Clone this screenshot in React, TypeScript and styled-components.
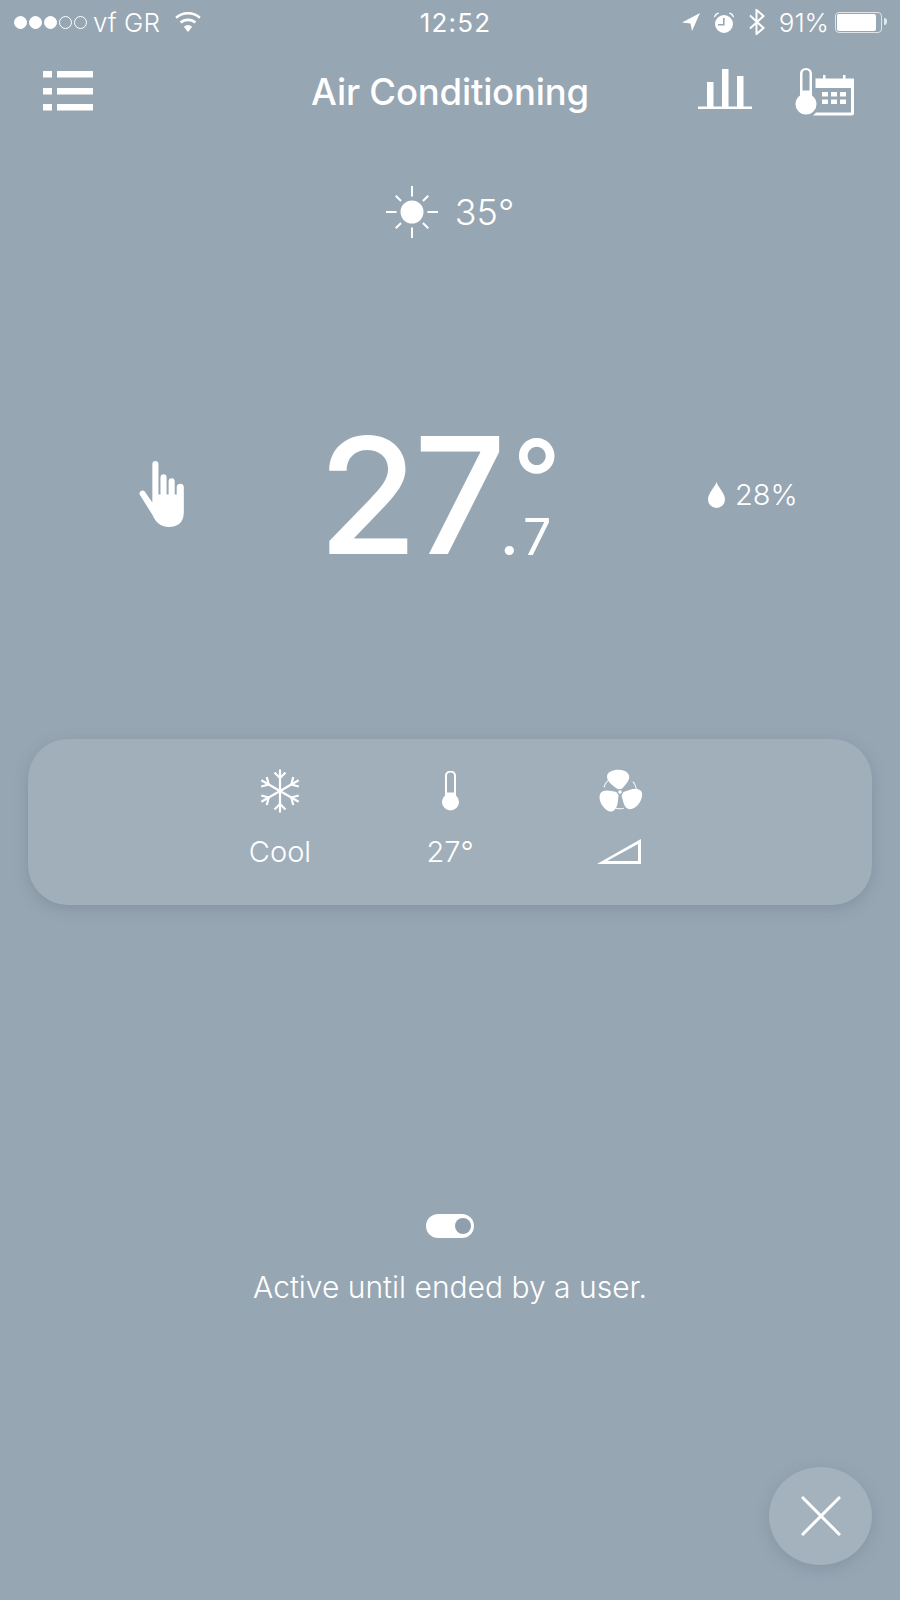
import React from 'react'
import styled, { createGlobalStyle } from 'styled-components'

const GlobalStyle = createGlobalStyle`
  html, body {
    margin: 0;
    padding: 0;
    background: #97a6b3;
  }
  * {
    box-sizing: border-box;
  }
`

const Page = styled.div`
  width: 900px;
  height: 1600px;
  overflow: hidden;
  display: flex;
  flex-direction: column;
  background: #97a6b3;
  color: #fff;
  font-family: Inter, 'Liberation Sans', sans-serif;
`

const StatusBar = styled.div`
  height: 44px;
  display: grid;
  grid-template-columns: 1fr auto 1fr;
  align-items: center;
  padding: 0 12px 0 14px;
  font-size: 26px;
  font-weight: 300;
`

const StatusSide = styled.div<{ $end?: boolean }>`
  display: flex;
  align-items: center;
  justify-content: ${(p) => (p.$end ? 'flex-end' : 'flex-start')};
`

const Signal = styled.div`
  display: flex;
  gap: 2px;
  margin-right: 6px;
`

const Dot = styled.span<{ $on?: boolean }>`
  width: 13px;
  height: 13px;
  border-radius: 50%;
  border: 1px solid #fff;
  background: ${(p) => (p.$on ? '#fff' : 'transparent')};
`

const Clock = styled.div`
  font-weight: 400;
  letter-spacing: 1.2px;
  margin-left: 9px;
`

const Battery = styled.div`
  width: 47px;
  height: 21px;
  margin-left: 6px;
  margin-right: 6px;
  padding: 1px;
  border: 1px solid #dfe4e8;
  border-radius: 4px;
  position: relative;
  &::before {
    content: '';
    display: block;
    width: 91%;
    height: 100%;
    background: #fff;
    border-radius: 2px;
  }
  &::after {
    content: '';
    position: absolute;
    right: -6px;
    top: 5px;
    width: 3px;
    height: 7px;
    background: #e3e7ea;
    border-radius: 0 3px 3px 0;
  }
`

const NavBar = styled.div`
  height: 96px;
  display: grid;
  grid-template-columns: 1fr auto 1fr;
  align-items: center;
  padding: 0 45px 0 43px;
`

const NavTitle = styled.h1`
  margin: 0 0 0 2px;
  font-size: 36.5px;
  font-weight: 500;
  letter-spacing: -0.2px;
`

const NavActions = styled.div`
  display: flex;
  justify-content: flex-end;
  align-items: flex-end;
  gap: 43px;
`

const Icon = styled.svg`
  display: block;
  fill: #fff;
  flex: none;
`

const Weather = styled.div`
  margin-top: 40px;
  height: 64px;
  display: flex;
  justify-content: center;
  align-items: center;
  gap: 17px;
  font-size: 36px;
  font-weight: 300;
`

const Readout = styled.div`
  margin-top: 175px;
  height: 150px;
  display: grid;
  grid-template-columns: 180px 390px 1fr;
  align-items: center;
  padding-left: 138px;
`

const Temperature = styled.div`
  display: flex;
  align-items: flex-start;
  line-height: 1;
`

const Whole = styled.div`
  font-size: 162px;
  font-weight: 500;
  letter-spacing: -4px;
  line-height: 150px;
  margin-top: 1px;
`

const Fraction = styled.div`
  display: flex;
  flex-direction: column;
  margin-left: 10px;
`

const Degree = styled.div`
  font-size: 106px;
  font-weight: 500;
  line-height: 118px;
  height: 80px;
`

const Tenths = styled.div`
  font-size: 50px;
  font-weight: 400;
  line-height: 50px;
  margin: 13px 0 0 -12px;
`

const TenthsPoint = styled.span`
  font-weight: 800;
  margin-right: 5px;
`

const Humidity = styled.div`
  display: flex;
  align-items: center;
  gap: 10px;
  font-size: 29px;
  font-weight: 300;
`

const ModePanel = styled.div`
  margin: 170px 28px 0;
  height: 166px;
  border-radius: 40px;
  background: #a1afbb;
  box-shadow: 0 4px 14px rgba(110, 125, 140, 0.45);
  display: grid;
  grid-template-columns: repeat(3, 170px);
  justify-content: center;
  padding-top: 29px;
`

const ModeItem = styled.div`
  display: flex;
  flex-direction: column;
  align-items: center;
`

const ModeIconSlot = styled.div`
  height: 46px;
  display: flex;
  align-items: center;
  justify-content: center;
`

const ModeLabel = styled.div`
  margin-top: 12px;
  height: 50px;
  display: flex;
  align-items: center;
  font-size: 29px;
  font-weight: 300;
`

const Schedule = styled.div`
  margin-top: 309px;
  display: flex;
  flex-direction: column;
  align-items: center;
`

const Toggle = styled.div`
  width: 48px;
  height: 24px;
  border-radius: 12px;
  background: #fff;
  display: flex;
  align-items: center;
  justify-content: flex-end;
  padding-right: 3px;
`

const ToggleKnob = styled.span`
  width: 16px;
  height: 16px;
  border-radius: 50%;
  background: #8f9fad;
`

const ScheduleText = styled.div`
  margin-top: 29px;
  font-size: 30px;
  font-weight: 300;
  line-height: 40px;
`

const FabRow = styled.div`
  margin-top: 160px;
  display: flex;
  justify-content: flex-end;
  padding-right: 28px;
`

const Fab = styled.button`
  width: 103px;
  height: 98px;
  padding: 0;
  border: 0;
  border-radius: 50%;
  background: #a4b2bd;
  box-shadow: 0 4px 14px rgba(110, 125, 140, 0.4);
  display: flex;
  align-items: center;
  justify-content: center;
`

const Wifi = () => (
  <Icon width="26" height="20" viewBox="0 0 26 20" style={{ marginLeft: 15 }}>
    <path d="M13 20 8.800 14.800a6.600 6.600 0 0 1 8.400 0z" />
    <path d="M13 6.600c3.200 0 6 1.100 8.200 3l-1.600 2a10.200 10.200 0 0 0-13.200 0l-1.600-2c2.200-1.900 5-3 8.200-3z" />
    <path d="M13 0c4.900 0 9.300 1.800 12.700 4.700l-1.600 2A17 17 0 0 0 1.900 6.700L.3 4.700C3.700 1.800 8.100 0 13 0z" />
  </Icon>
)

const LocationArrow = () => (
  <Icon width="18" height="18" viewBox="0 0 18 18">
    <path d="M18 0 0 9.500l8.500 1 1.500 7.500z" />
  </Icon>
)

const Alarm = () => (
  <Icon width="22" height="21" viewBox="0 0 22 21" style={{ marginLeft: 13 }}>
    <path fillRule="evenodd" d="M11 3a9 9 0 1 1 0 18 9 9 0 0 1 0-18zm-1 3v6H5v1.600h6.600V6z" />
    <path d="M1 5C1.500 2.500 3 1 5.500.5l.4 1C4 2.200 2.800 3.500 2 5.500zM21 5C20.500 2.500 19 1 16.500.5l-.4 1C18 2.200 19.200 3.500 20 5.500z" />
  </Icon>
)

const Bluetooth = () => (
  <Icon width="18" height="26" viewBox="0 0 18 26" style={{ marginLeft: 13, marginRight: 13, fill: 'none', stroke: '#fff', strokeWidth: 2 }}>
    <path d="M2 6.500 15.500 19 8.500 25V1l7 6L2 19.500" />
  </Icon>
)

const MenuIcon = () => (
  <Icon width="50" height="40" viewBox="0 0 50 40" style={{ marginTop: -2 }}>
    <rect x="0" y="0" width="9" height="6.500" />
    <rect x="14" y="0" width="36" height="6.500" />
    <rect x="0" y="17" width="9" height="6.500" />
    <rect x="14" y="17" width="36" height="6.500" />
    <rect x="0" y="33" width="9" height="6.500" />
    <rect x="14" y="33" width="36" height="6.500" />
  </Icon>
)

const ChartIcon = () => (
  <Icon width="54" height="40" viewBox="0 0 54 40" style={{ marginBottom: 7 }}>
    <rect x="9" y="13" width="6.500" height="25" />
    <rect x="24" y="0" width="6.500" height="38" />
    <rect x="39" y="7" width="6.500" height="31" />
    <rect x="0" y="37.500" width="54" height="2.500" />
  </Icon>
)

const ThermoCalendarIcon = () => (
  <Icon width="60" height="48" viewBox="0 0 60 48">
    <path fillRule="evenodd" d="M5 5.500a6 5.500 0 0 1 12 0V27.500a10.500 10.500 0 1 1-12 0zM7.500 5.500v17h7v-17a3.500 3.500 0 0 0-7 0z" />
    <path fillRule="evenodd" d="M28 7h2.500v3.500H48V7h2.500v3.500H59V45a2.500 2.500 0 0 1-2.500 2.500H18a13 13 0 0 0 3-3H56V20H20.500v-9.500H28zM27 24h6v4.500h-6zM36 24h6v4.500h-6zM45 24h6v4.500h-6zM27 31.500h6V36h-6zM36 31.500h6V36h-6zM45 31.500h6V36h-6z" />
  </Icon>
)

const Sun = () => {
  const rays = [0, 45, 90, 135, 180, 225, 270, 315]
  return (
    <Icon width="52" height="52" viewBox="-26 -26 52 52">
      <circle r="11.500" />
      {rays.map((a) => (
        <line key={a} x1="0" y1="-15.500" x2="0" y2={a % 90 === 0 ? -26 : -23} stroke="#fff" strokeWidth="2" transform={`rotate(${a})`} />
      ))}
    </Icon>
  )
}

const HandIcon = () => (
  <Icon width="48" height="67" viewBox="0 0 47 66">
    <path d="M14 3a3 3 0 0 1 6 0V33h2V16a3 3 0 0 1 6 0V33h2V20a3 3 0 0 1 6 0V33h2V26a3.500 3.500 0 0 1 7 0V50C45 60 40 65 30 65 22 65 17 60 14 53L1.500 33a3 3 0 0 1 5-3L14 41z" />
  </Icon>
)

const DropIcon = () => (
  <Icon width="17" height="26" viewBox="0 0 17 26">
    <path d="M8.500 0C10 5 17 11 17 17.500a8.500 8.500 0 0 1-17 0C0 11 7 5 8.500 0z" />
  </Icon>
)

const Snowflake = () => {
  const arms = [0, 60, 120, 180, 240, 300]
  return (
    <Icon width="42" height="44" viewBox="-21 -22 42 44" style={{ fill: 'none', stroke: '#fff', strokeWidth: 2.2 }}>
      {arms.map((a) => (
        <g key={a} transform={`rotate(${a})`}>
          <path d="M0 0V-21.500" />
          <path d="M-5.500 -18.500 0 -13 5.500 -18.500" />
        </g>
      ))}
    </Icon>
  )
}

const ThermometerIcon = () => (
  <Icon width="17" height="40" viewBox="0 0 17 40">
    <path fillRule="evenodd" d="M3 4.500a5 4.500 0 0 1 11 0V24.500a8.500 8.500 0 1 1-11 0zM5 4.500v17h7v-17a3.500 3 0 0 0-7 0z" />
  </Icon>
)

const FanIcon = () => {
  const blades = [-5, 120, 235]
  return (
    <Icon width="46" height="44" viewBox="-23 -23 46 44">
      {blades.map((a) => (
        <g key={a} transform={`rotate(${a})`}>
          <path d="M-1.800 -3C-6 -7-12.500-11-11.500-17-10.500-23.500 6-24.500 10-17 12.500-12 6-7 2.200-3z" />
          <path d="M-11 -12.500Q-14.500 -9.500 -15.500 -6" fill="none" stroke="#fff" strokeWidth="1" />
        </g>
      ))}
      <circle r="1.800" />
    </Icon>
  )
}

const WedgeIcon = () => (
  <Icon width="44" height="25" viewBox="0 0 44 25" style={{ marginRight: 2 }}>
    <path fillRule="evenodd" d="M44 0V25H0zM41 5 10 22H41z" />
  </Icon>
)

export default function App() {
  return (
    <Page>
      <GlobalStyle />
      <StatusBar>
        <StatusSide>
          <Signal>
            <Dot $on />
            <Dot $on />
            <Dot $on />
            <Dot />
            <Dot />
          </Signal>
          vf GR
          <Wifi />
        </StatusSide>
        <Clock>12:52</Clock>
        <StatusSide $end>
          <LocationArrow />
          <Alarm />
          <Bluetooth />
          91%
          <Battery />
        </StatusSide>
      </StatusBar>

      <NavBar>
        <MenuIcon />
        <NavTitle>Air Conditioning</NavTitle>
        <NavActions>
          <ChartIcon />
          <ThermoCalendarIcon />
        </NavActions>
      </NavBar>

      <Weather>
        <Sun />
        35°
      </Weather>

      <Readout>
        <HandIcon />
        <Temperature>
          <Whole>27</Whole>
          <Fraction>
            <Degree>°</Degree>
            <Tenths>
              <TenthsPoint>.</TenthsPoint>7
            </Tenths>
          </Fraction>
        </Temperature>
        <Humidity>
          <DropIcon />
          28%
        </Humidity>
      </Readout>

      <ModePanel>
        <ModeItem>
          <ModeIconSlot>
            <Snowflake />
          </ModeIconSlot>
          <ModeLabel>Cool</ModeLabel>
        </ModeItem>
        <ModeItem>
          <ModeIconSlot>
            <ThermometerIcon />
          </ModeIconSlot>
          <ModeLabel>27°</ModeLabel>
        </ModeItem>
        <ModeItem>
          <ModeIconSlot>
            <FanIcon />
          </ModeIconSlot>
          <ModeLabel>
            <WedgeIcon />
          </ModeLabel>
        </ModeItem>
      </ModePanel>

      <Schedule>
        <Toggle>
          <ToggleKnob />
        </Toggle>
        <ScheduleText>Active until ended by a user.</ScheduleText>
      </Schedule>

      <FabRow>
        <Fab aria-label="Close">
          <Icon width="40" height="40" viewBox="0 0 40 40">
            <path d="M1 1 39 39M39 1 1 39" stroke="#fff" strokeWidth="3" />
          </Icon>
        </Fab>
      </FabRow>
    </Page>
  )
}
